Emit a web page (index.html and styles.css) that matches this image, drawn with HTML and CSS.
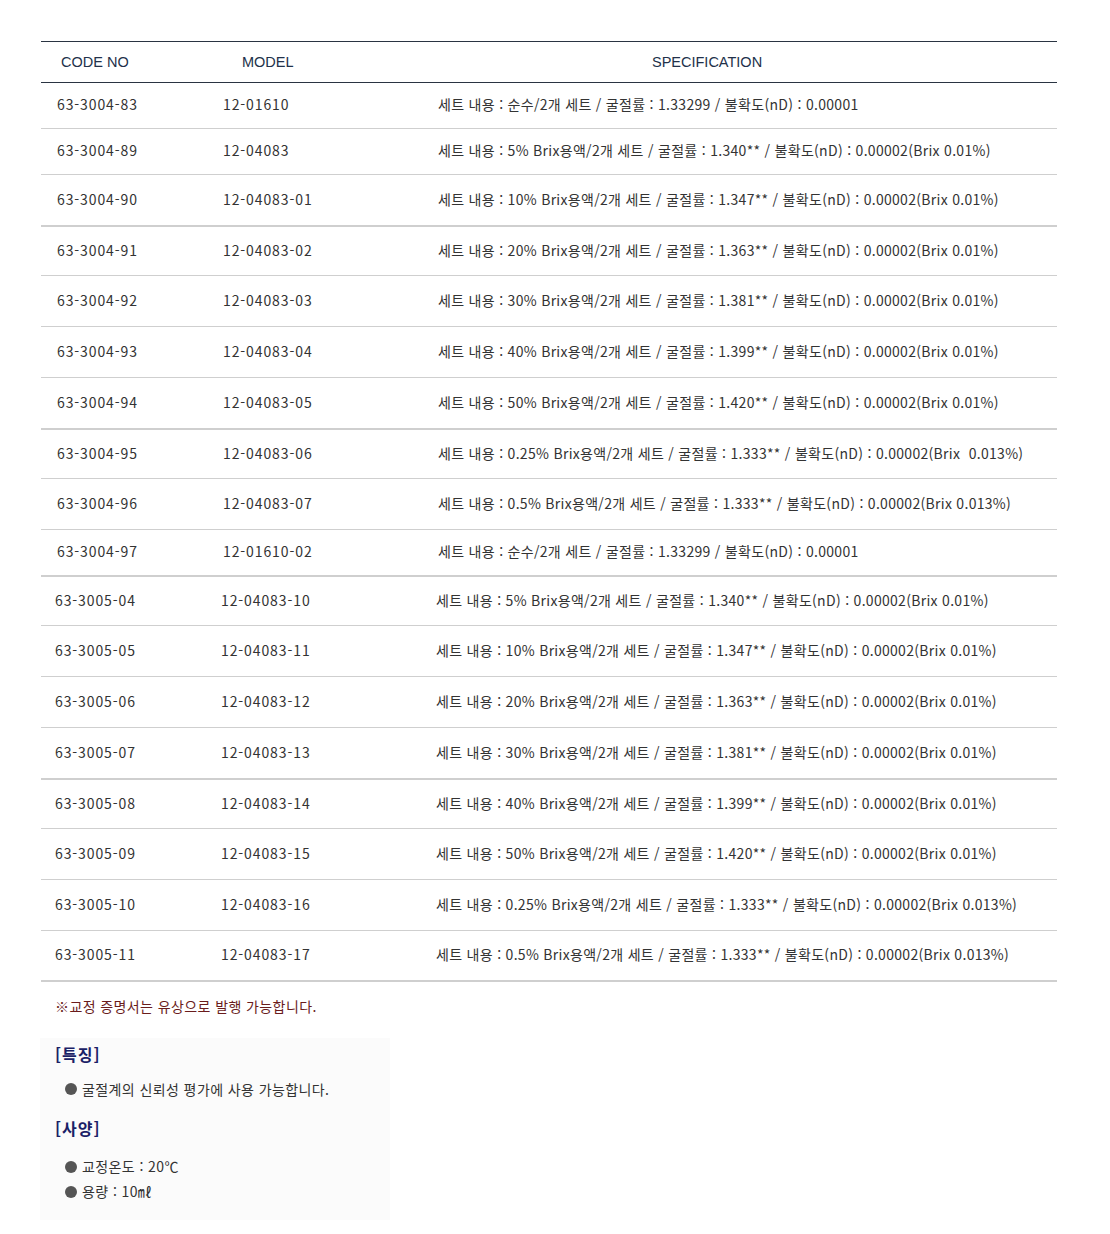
FILE: index.html
```html
<!DOCTYPE html>
<html lang="ko">
<head>
<meta charset="utf-8">
<title>Refractometer Standard Solutions</title>
<link rel="stylesheet" href="styles.css">
</head>
<body>
<div class="page">
  <div class="table">
    <div class="thead">
      <div class="th th-code">CODE NO</div>
      <div class="th th-model">MODEL</div>
      <div class="th th-spec">SPECIFICATION</div>
    </div>
    <div class="row r-s"><div class="c1">63-3004-83</div><div class="c2">12-01610</div><div class="c3">세트 내용 : 순수/2개 세트 / 굴절률 : 1.33299 / 불확도(nD) : 0.00001</div></div>
    <div class="row r-s"><div class="c1">63-3004-89</div><div class="c2">12-04083</div><div class="c3">세트 내용 : 5% Brix용액/2개 세트 / 굴절률 : 1.340** / 불확도(nD) : 0.00002(Brix 0.01%)</div></div>
    <div class="row r-b"><div class="c1">63-3004-90</div><div class="c2">12-04083-01</div><div class="c3">세트 내용 : 10% Brix용액/2개 세트 / 굴절률 : 1.347** / 불확도(nD) : 0.00002(Brix 0.01%)</div></div>
    <div class="row r-m"><div class="c1">63-3004-91</div><div class="c2">12-04083-02</div><div class="c3">세트 내용 : 20% Brix용액/2개 세트 / 굴절률 : 1.363** / 불확도(nD) : 0.00002(Brix 0.01%)</div></div>
    <div class="row"><div class="c1">63-3004-92</div><div class="c2">12-04083-03</div><div class="c3">세트 내용 : 30% Brix용액/2개 세트 / 굴절률 : 1.381** / 불확도(nD) : 0.00002(Brix 0.01%)</div></div>
    <div class="row"><div class="c1">63-3004-93</div><div class="c2">12-04083-04</div><div class="c3">세트 내용 : 40% Brix용액/2개 세트 / 굴절률 : 1.399** / 불확도(nD) : 0.00002(Brix 0.01%)</div></div>
    <div class="row r-b"><div class="c1">63-3004-94</div><div class="c2">12-04083-05</div><div class="c3">세트 내용 : 50% Brix용액/2개 세트 / 굴절률 : 1.420** / 불확도(nD) : 0.00002(Brix 0.01%)</div></div>
    <div class="row r-m"><div class="c1">63-3004-95</div><div class="c2">12-04083-06</div><div class="c3">세트 내용 : 0.25% Brix용액/2개 세트 / 굴절률 : 1.333** / 불확도(nD) : 0.00002(Brix&nbsp; 0.013%)</div></div>
    <div class="row"><div class="c1">63-3004-96</div><div class="c2">12-04083-07</div><div class="c3">세트 내용 : 0.5% Brix용액/2개 세트 / 굴절률 : 1.333** / 불확도(nD) : 0.00002(Brix 0.013%)</div></div>
    <div class="row r-s r-b"><div class="c1">63-3004-97</div><div class="c2">12-01610-02</div><div class="c3">세트 내용 : 순수/2개 세트 / 굴절률 : 1.33299 / 불확도(nD) : 0.00001</div></div>
    <div class="row r-m sec2"><div class="c1">63-3005-04</div><div class="c2">12-04083-10</div><div class="c3">세트 내용 : 5% Brix용액/2개 세트 / 굴절률 : 1.340** / 불확도(nD) : 0.00002(Brix 0.01%)</div></div>
    <div class="row sec2"><div class="c1">63-3005-05</div><div class="c2">12-04083-11</div><div class="c3">세트 내용 : 10% Brix용액/2개 세트 / 굴절률 : 1.347** / 불확도(nD) : 0.00002(Brix 0.01%)</div></div>
    <div class="row sec2"><div class="c1">63-3005-06</div><div class="c2">12-04083-12</div><div class="c3">세트 내용 : 20% Brix용액/2개 세트 / 굴절률 : 1.363** / 불확도(nD) : 0.00002(Brix 0.01%)</div></div>
    <div class="row r-b sec2"><div class="c1">63-3005-07</div><div class="c2">12-04083-13</div><div class="c3">세트 내용 : 30% Brix용액/2개 세트 / 굴절률 : 1.381** / 불확도(nD) : 0.00002(Brix 0.01%)</div></div>
    <div class="row r-m sec2"><div class="c1">63-3005-08</div><div class="c2">12-04083-14</div><div class="c3">세트 내용 : 40% Brix용액/2개 세트 / 굴절률 : 1.399** / 불확도(nD) : 0.00002(Brix 0.01%)</div></div>
    <div class="row sec2"><div class="c1">63-3005-09</div><div class="c2">12-04083-15</div><div class="c3">세트 내용 : 50% Brix용액/2개 세트 / 굴절률 : 1.420** / 불확도(nD) : 0.00002(Brix 0.01%)</div></div>
    <div class="row sec2"><div class="c1">63-3005-10</div><div class="c2">12-04083-16</div><div class="c3">세트 내용 : 0.25% Brix용액/2개 세트 / 굴절률 : 1.333** / 불확도(nD) : 0.00002(Brix 0.013%)</div></div>
    <div class="row r-l r-b sec2"><div class="c1">63-3005-11</div><div class="c2">12-04083-17</div><div class="c3">세트 내용 : 0.5% Brix용액/2개 세트 / 굴절률 : 1.333** / 불확도(nD) : 0.00002(Brix 0.013%)</div></div>
  </div>

  <p class="note">※교정 증명서는 유상으로 발행 가능합니다.</p>

  <div class="info">
    <h3 class="info-title">[특징]</h3>
    <ul class="info-list">
      <li>굴절계의 신뢰성 평가에 사용 가능합니다.</li>
    </ul>
    <h3 class="info-title">[사양]</h3>
    <ul class="info-list tight">
      <li>교정온도 : 20℃</li>
      <li>용량 : 10㎖</li>
    </ul>
  </div>
</div>
</body>
</html>
```

FILE: styles.css
```css
* { box-sizing: border-box; }
html, body { margin: 0; padding: 0; background: #ffffff; }
body {
  font-family: "Noto Sans CJK KR", "Liberation Sans", sans-serif;
  color: #333333;
}
.page {
  width: 1110px;
  padding: 41px 53px 0 41px;
}
.table {
  width: 1016px;
  border-top: 1px solid #2a3442;
}
.thead {
  display: grid;
  grid-template-columns: 166px 215px 1fr;
  height: 41px;
  border-bottom: 1px solid #2a3442;
  align-items: center;
  font-family: "Liberation Sans", Arial, sans-serif;
  font-size: 14.5px;
  color: #22314a;
}
.th-code { padding-left: 20px; }
.th-model { padding-left: 35px; }
.th-spec { padding-left: 230px; }

.row {
  display: grid;
  grid-template-columns: 166px 215px 1fr;
  height: 51px;
  align-items: center;
  border-bottom: 1px solid #cfcfcf;
  font-size: 14px;
  letter-spacing: 0.3px;
  color: #333333;
  padding-bottom: 3px;
}
.row.r-s { height: 46px; }
.row.r-m { height: 49px; }
.row.r-l { height: 50px; }
.row.r-b { border-bottom-width: 2px; height: 52px; }
.row.r-b.r-s { height: 47px; }
.row.r-b.r-l { height: 51px; }
.c1, .c2 { padding-left: 16px; letter-spacing: 0.9px; }
.c3 { padding-left: 16px; white-space: nowrap; }
.sec2 .c1, .sec2 .c2, .sec2 .c3 { padding-left: 14px; }

.note {
  margin: 15px 0 0 14px;
  font-size: 14px;
  letter-spacing: 0.4px;
  color: #6a1c1c;
  line-height: 18px;
}
.info {
  width: 350px;
  margin: 23px 0 0 -1px;
  background: #fbfbfb;
  padding: 6px 0 8px 15px;
}
.info-title {
  margin: 0;
  font-size: 16px;
  letter-spacing: 1px;
  font-weight: bold;
  color: #1a2166;
  line-height: 20px;
}
.info-list {
  list-style: none;
  margin: 15px 0 19px 0;
  padding: 0 0 0 10px;
  font-size: 14px;
  letter-spacing: 0.4px;
  color: #333333;
}
.info-list li {
  display: flex;
  align-items: center;
  gap: 5px;
  line-height: 20px;
}
.info-list li::before {
  content: "";
  width: 12px;
  height: 12px;
  border-radius: 50%;
  background: #555555;
  flex: none;
}
.info-list.tight { margin-top: 16px; margin-bottom: 8px; }
.info-list.tight li { line-height: 25px; }
```
